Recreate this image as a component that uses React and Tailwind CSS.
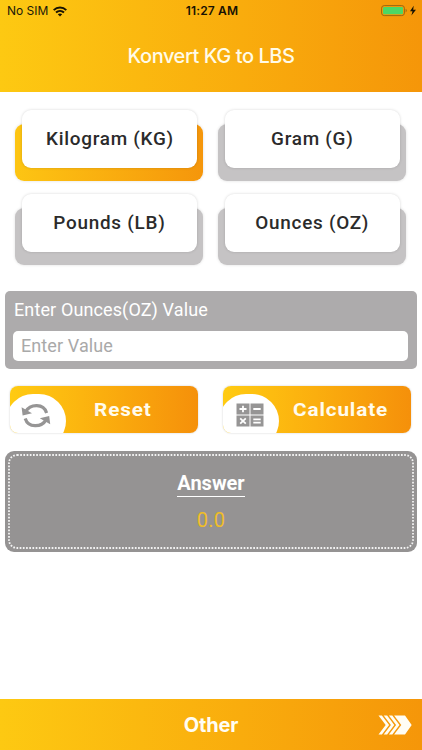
import React from "react";

function UnitCard({ label, active }) {
  return (
    <button className="grid h-[71px] w-[188px] grid-cols-1 grid-rows-1">
      <span
        className={`col-start-1 row-start-1 mt-[14px] rounded-[9px] shadow-[0_0_3px_rgba(0,0,0,0.14)] ${
          active ? "bg-linear-to-r from-[#fdc513] to-[#f5960b]" : "bg-[#c5c3c4]"
        }`}
      />
      <span className="col-start-1 row-start-1 mr-[6px] mb-[13px] ml-[7px] flex items-center justify-center rounded-[9px] bg-white shadow-[0_0_3px_rgba(0,0,0,0.16)]">
        <span className="scale-x-[1.05] text-[18px] leading-6 font-medium tracking-[0.7px] whitespace-nowrap text-[#2b2b2b]">{label}</span>
      </span>
    </button>
  );
}

function ResetIcon() {
  return (
    <svg width="30" height="26" viewBox="0 0 30 26" fill="none">
      <path d="M4.6 8.8C9.4.6 22.6.4 25.6 9.9" stroke="#969595" strokeWidth="3.2" />
      <path d="M25.2 16.6C20.4 24.8 7.2 25 4.2 15.5" stroke="#969595" strokeWidth="3.2" />
      <path d="M.6 4.2 1.6 12.4 11 10.2Z" fill="#969595" />
      <path d="M29.2 21.2 28.2 13 18.8 15.2Z" fill="#969595" />
    </svg>
  );
}

function CalcIcon() {
  return (
    <svg width="28" height="24" viewBox="0 0 28 24" fill="none">
      <path d="M.5.5h13v11H.5zM14.5.5h13v11h-13zM.5 12.5h13v11H.5zM14.5 12.5h13v11h-13z" fill="#969595" />
      <path d="M3.5 6h7M7 2.8v6.4M17.3 6h7.4M4.2 15.4l5.6 5.2M9.8 15.4l-5.6 5.2M17.3 16.4h7.4M17.3 19.6h7.4" stroke="#fff" strokeWidth="1.8" />
    </svg>
  );
}

function ActionButton({ label, icon, className }) {
  return (
    <button className="relative h-[47px] w-[188px] overflow-hidden rounded-[8px] bg-linear-to-r from-[#ffcb12] to-[#f5900a] shadow-[0_0_2px_rgba(0,0,0,0.22)]">
      <span className="absolute top-[8px] left-[-4px] h-[54px] w-[60px] rounded-full bg-white" />
      <span className="absolute top-[17px] left-[11px]">{icon}</span>
      <span className={`relative flex text-[19px] leading-[48px] font-bold tracking-[0.8px] text-[#fffbed] ${className}`}>
        <span className="origin-left scale-x-[1.09]">{label}</span>
      </span>
    </button>
  );
}

export default function App() {
  return (
    <div className="flex h-[750px] w-[422px] flex-col overflow-hidden bg-white font-[Roboto,sans-serif]">
      <header className="h-[92px] shrink-0 bg-linear-to-r from-[#fdc912] to-[#f59609] font-[Inter,sans-serif]">
        <div className="grid h-[22px] grid-cols-3 items-center pr-[5px] pl-[7px] text-[12px] text-[#20190a]">
          <div className="flex items-center gap-[5px]">
            <span>No SIM</span>
            <svg width="14" height="11" viewBox="0 0 14 11" fill="none" stroke="#171203" strokeWidth="2">
              <path d="M.7 4.1C4.3.6 9.7.6 13.3 4.1M3 6.6c2.3-2.1 5.7-2.1 8 0" />
              <path d="M4.8 8.3c1.3-1.1 3.1-1.1 4.4 0L7 10.6Z" fill="#171203" stroke="none" />
            </svg>
          </div>
          <span className="text-center font-semibold tracking-[0.15px] text-[#171203]">11:27 AM</span>
          <svg className="justify-self-end" width="36" height="12" viewBox="0 0 36 12">
            <rect x=".6" y=".6" width="22.8" height="10" rx="2.6" fill="none" stroke="#9b6811" />
            <rect x="2" y="2" width="20" height="7.2" rx="1.3" fill="#4cd765" />
            <path d="M24.6 3.8c1.6.7 1.6 2.9 0 3.6Z" fill="#9b6811" />
            <path d="M32.7.8 29 6.3h2.5L30.4 10.5 35 4.7h-2.8Z" fill="#171203" />
          </svg>
        </div>
        <h1 className="mt-[22px] text-center text-[20px] leading-6 font-medium tracking-[-0.45px] text-[#fffbe8]">Konvert KG to LBS</h1>
      </header>

      <main className="flex grow flex-col px-[5px] pt-[18px]">
        <div className="grid grid-cols-[188px_188px] gap-x-[15px] gap-y-[13px] pl-[10px]">
          <UnitCard label="Kilogram (KG)" active />
          <UnitCard label="Gram (G)" />
          <UnitCard label="Pounds (LB)" />
          <UnitCard label="Ounces (OZ)" />
        </div>

        <section className="mt-[26px] h-[78px] rounded-[5px] bg-[#adabac] px-[8px] pt-[7px]">
          <label className="block pl-px text-[18px] leading-6 tracking-[0.12px] text-white">Enter Ounces(OZ) Value</label>
          <input
            className="mt-[9px] block h-[30px] w-[395px] rounded-[5px] bg-white px-[8px] pb-px text-[18px] tracking-[0.1px] text-[#2b2b2b] outline-none placeholder:text-[#a9a9a9]"
            placeholder="Enter Value"
          />
        </section>

        <div className="mt-[17px] flex gap-[25px] pl-[5px]">
          <ActionButton label="Reset" icon={<ResetIcon />} className="pl-[84px]" />
          <ActionButton label="Calculate" icon={<div className="pl-[2px]"><CalcIcon /></div>} className="pl-[70px]" />
        </div>

        <section className="relative mt-[18px] flex h-[101px] flex-col items-center rounded-[9px] bg-[#959393] pt-[20px]">
          <svg className="absolute inset-0" width="412" height="101" fill="none">
            <rect x="4" y="4" width="404" height="93" rx="8" stroke="#f3f3f3" strokeWidth="1.8" strokeDasharray="1.7 1.5" />
          </svg>
          <h2 className="h-[26px] border-b border-white text-[20px] leading-6 font-bold text-white">Answer</h2>
          <p className="mt-[11px] text-[20px] leading-6 tracking-[0.2px] text-[#efbd27]">0.0</p>
        </section>
      </main>

      <footer className="grid h-[51px] shrink-0 grid-cols-[1fr_auto_1fr] items-center bg-linear-to-r from-[#fdc912] to-[#f59609] pr-[10px] pl-[10px]">
        <span />
        <span className="font-[Inter,sans-serif] text-[20px] font-bold tracking-[-0.2px] text-[#fffdf4]">Other</span>
        <svg className="justify-self-end" width="34" height="20" viewBox="0 0 34 20" fill="#fffdf4">
          <path d="M.5.5h3.4l7.2 9.5-7.2 9.5H.5L7.7 10ZM5.7.5h3.4l7.2 9.5-7.2 9.5H5.7l7.2-9.5ZM10.9.5h3.4l7.2 9.5-7.2 9.5h-3.4l7.2-9.5ZM16.1.5H27L33.7 10 27 19.5H16.1l7.2-9.5Z" />
        </svg>
      </footer>
    </div>
  );
}
